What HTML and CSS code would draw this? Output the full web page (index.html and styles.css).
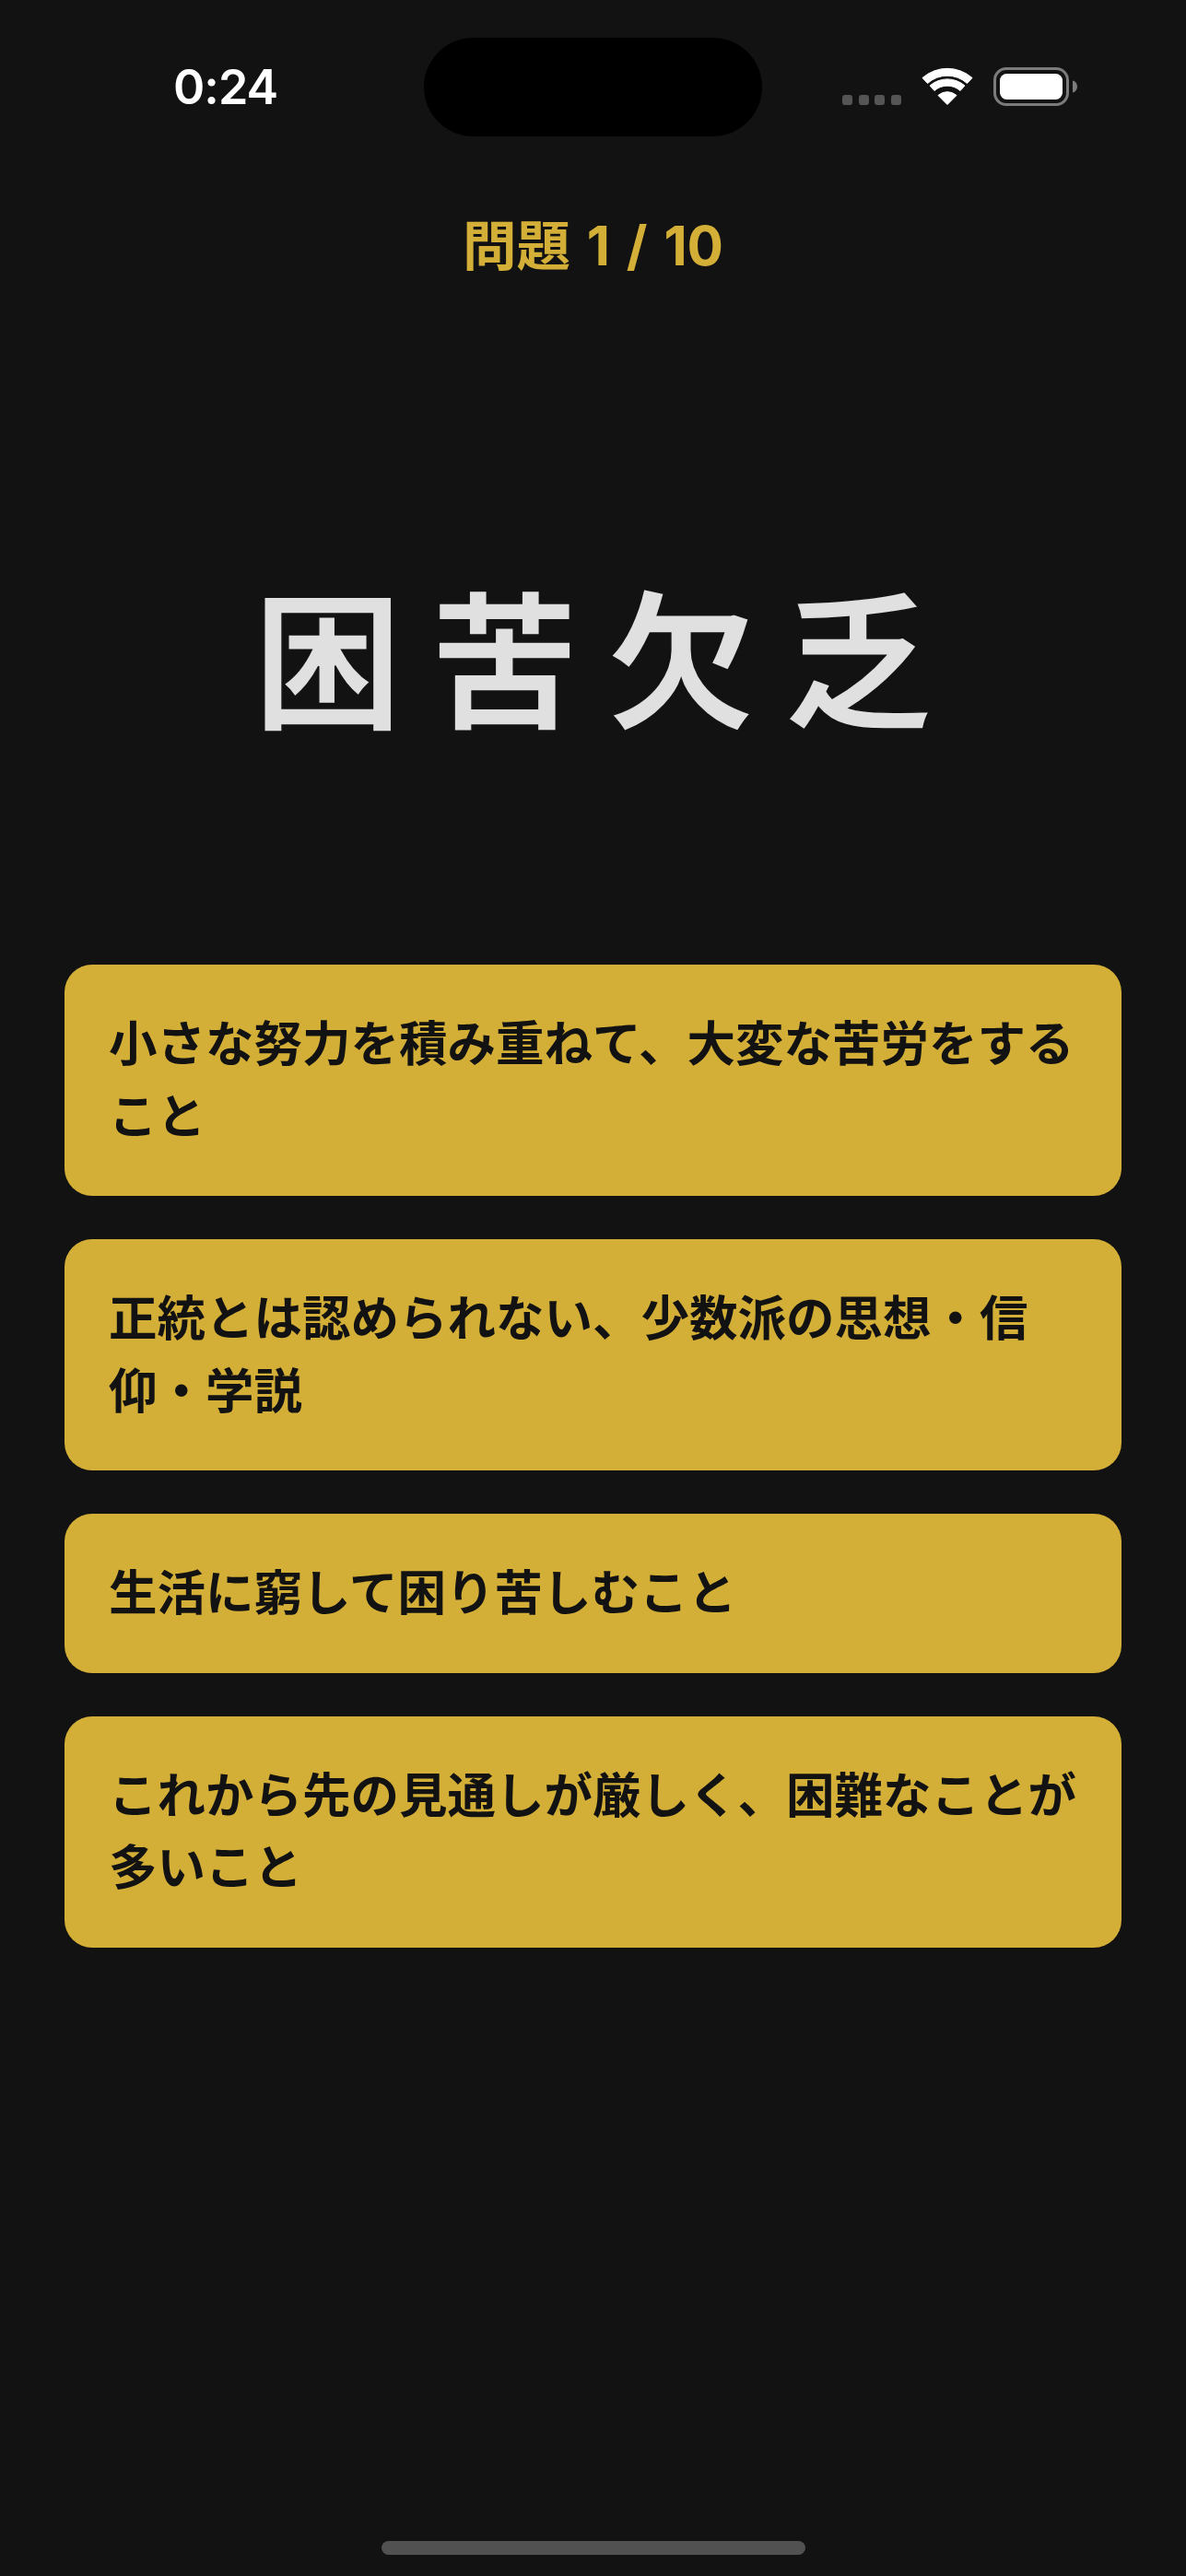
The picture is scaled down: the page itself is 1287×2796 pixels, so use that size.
FILE: index.html
```html
<!DOCTYPE html>
<html lang="ja">
<head>
<meta charset="utf-8">
<title>問題 1 / 10</title>
<link rel="stylesheet" href="styles.css">
</head>
<body>
<main class="screen">
  <header class="status">
    <div class="status-left"><span class="time">0:24</span></div>
    <div class="island"></div>
    <div class="status-right">
      <div class="signal"><i></i><i></i><i></i><i></i></div>
      <svg class="wifi" viewBox="0 0 56 41" aria-hidden="true">
        <path d="M1 11.5A41 41 0 0 1 55 11.5L49.5 17.5A32 32 0 0 0 6.5 17.5Z"/>
        <path d="M9 20A29 29 0 0 1 47 20L42 25.5A21 21 0 0 0 14 25.5Z"/>
        <path d="M18 30.5A15 15 0 0 1 38 30.5L28 40.5Z"/>
      </svg>
      <svg class="battery" viewBox="0 0 92 42" aria-hidden="true">
        <rect class="battery-shell" x="1.5" y="1.5" width="79" height="39" rx="12.5"/>
        <rect class="battery-fill" x="7" y="7" width="68" height="28" rx="7.5"/>
        <path class="battery-nub" d="M86 14.5C89 15 91 18 91 21C91 24 89 27 86 27.5Z"/>
      </svg>
    </div>
  </header>

  <p class="counter">問題 1 / 10</p>

  <h1 class="word">困苦欠乏</h1>

  <div class="options">
    <button class="option">小さな努力を積み重ねて、大変な苦労をする<br>こと</button>
    <button class="option">正統とは認められない、少数派の思想・信<br>仰・学説</button>
    <button class="option">生活に窮して困り苦しむこと</button>
    <button class="option">これから先の見通しが厳しく、困難なことが<br>多いこと</button>
  </div>

  <div class="home-bar"></div>
</main>
</body>
</html>
```

FILE: styles.css
```css
* {
  box-sizing: border-box;
}

html,
body {
  margin: 0;
  padding: 0;
  background: #121212;
}

.screen {
  display: flex;
  flex-direction: column;
  width: 1287px;
  height: 2796px;
  overflow: hidden;
  background: #121212;
  font-family: Inter, "Noto Sans CJK JP", sans-serif;
}

.status {
  display: grid;
  grid-template-columns: 1fr 367px 1fr;
  height: 107px;
  margin-top: 41px;
}

.status-left {
  display: flex;
  align-items: center;
  padding-left: 188px;
}

.time {
  color: #fff;
  font-size: 52px;
  font-weight: 600;
  line-height: 60px;
  letter-spacing: -1px;
  margin-top: 0;
}

.island {
  height: 107px;
  border-radius: 54px;
  background: #000;
}

.status-right {
  display: flex;
  align-items: flex-start;
  padding: 32px 0 0 87px;
}

.signal {
  display: flex;
  gap: 6.5px;
  margin-top: 30px;
  margin-right: 22px;
}

.signal i {
  width: 11px;
  height: 11px;
  border-radius: 3px;
  background: #555;
}

.wifi {
  width: 56px;
  height: 41px;
  margin-right: 22px;
  fill: #fff;
  stroke: #fff;
  stroke-width: 1;
  stroke-linejoin: round;
}

.battery {
  width: 92px;
  height: 42px;
}

.battery-shell {
  fill: none;
  stroke: #7b7b7b;
  stroke-width: 3;
}

.battery-fill {
  fill: #fff;
}

.battery-nub {
  fill: #7b7b7b;
}

.counter {
  margin: 79px 0 0;
  color: #d4af37;
  font-size: 58.5px;
  font-weight: 700;
  line-height: 80px;
  word-spacing: 4px;
  text-align: center;
}

.word {
  margin: 309px 0 0;
  color: #e0e0e0;
  font-size: 161px;
  font-weight: 700;
  -webkit-text-stroke: 1.5px #121212;
  line-height: 210px;
  letter-spacing: 31px;
  text-align: center;
  padding-left: 31px;
}

.options {
  display: flex;
  flex-direction: column;
  gap: 47px;
  margin: 221px 70px 0;
}

.option {
  display: block;
  width: 100%;
  padding: 47px 0 47px 48px;
  border: 0;
  border-radius: 30px;
  background: #d4af37;
  color: #121212;
  font-family: inherit;
  font-size: 52.5px;
  font-weight: 700;
  line-height: 78.5px;
  text-align: left;
}

.home-bar {
  width: 460px;
  height: 15px;
  margin: auto auto 23px;
  border-radius: 8px;
  background: #515151;
}
```
